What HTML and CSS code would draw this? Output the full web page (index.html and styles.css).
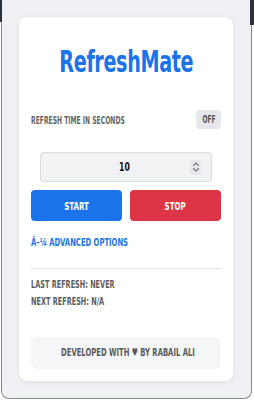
FILE: index.html
```html
<!DOCTYPE html>
<html>
<head>
<meta charset="utf-8">
<link rel="stylesheet" href="styles.css">
</head>
<body>
<div class="frame">
  <div class="card">
    <h1 class="title"><span class="sx">RefreshMate</span></h1>
    <div class="row">
      <span class="label sx">Refresh time in seconds</span>
      <span class="badge"><span class="sx">OFF</span></span>
    </div>
    <div class="input">
      <span class="value"><span class="sx">10</span></span>
      <span class="spin">
        <svg width="8" height="12" viewBox="0 0 8 12"><path d="M1.5 4.5 L4 2 L6.5 4.5 M1.5 7.5 L4 10 L6.5 7.5" fill="none" stroke="#777" stroke-width="1.1" stroke-linecap="round" stroke-linejoin="round"/></svg>
      </span>
    </div>
    <div class="buttons">
      <button class="btn start"><span class="sx">Start</span></button>
      <button class="btn stop"><span class="sx">Stop</span></button>
    </div>
    <div class="advanced"><span class="sx left">â–¼ Advanced Options</span></div>
    <div class="divider"></div>
    <div class="status"><span class="sx left">Last refresh: Never</span></div>
    <div class="status"><span class="sx left">Next refresh: N/A</span></div>
    <div class="footer"><span class="sx">Developed with ♥ by Rabail Ali</span></div>
  </div>
</div>
</body>
</html>
```
FILE: styles.css
```css
html, body {
  margin: 0;
  padding: 0;
  background: #ffffff;
}
body {
  font-family: "Liberation Sans Narrow", "DejaVu Sans", sans-serif;
  font-stretch: condensed;
  font-weight: bold;
}
.sx {
  display: inline-block;
  white-space: nowrap;
  transform: scaleX(var(--sx, 0.7));
  transform-origin: center center;
}
.sx.left {
  transform-origin: left center;
}
.frame {
  position: relative;
  box-sizing: border-box;
  margin-left: 1px;
  width: 251px;
  height: 399px;
  border: 1px solid #8a8a8a;
  border-top: none;
  border-radius: 0 0 8px 8px;
  background: #eff0f3;
  padding: 17px 17px 0 17px;
}
.frame::before {
  content: "";
  position: absolute;
  left: -2px;
  top: 0;
  width: 2px;
  height: 22px;
  background: #2c3038;
}
.frame::after {
  content: "";
  position: absolute;
  right: -4px;
  top: 0;
  width: 5px;
  height: 25px;
  background: #2c3038;
}
.card {
  box-sizing: border-box;
  width: 214px;
  height: 364px;
  background: #ffffff;
  border-radius: 8px;
  box-shadow: 0 1px 4px rgba(0,0,0,0.08);
  padding: 25px 12px 12px 12px;
  display: flex;
  flex-direction: column;
}
.title {
  margin: 0;
  height: 40px;
  line-height: 40px;
  text-align: center;
  color: #1a73e8;
  font-size: 30px;
  font-weight: bold;
  letter-spacing: -0.5px;
  --sx: 0.71;
}
.row {
  margin-top: 28px;
  display: flex;
  align-items: center;
  justify-content: space-between;
  height: 19px;
}
.label {
  font-size: 10.5px;
  color: #666666;
  text-transform: uppercase;
  transform-origin: left center;
  --sx: 0.64;
}
.badge {
  width: 25px;
  height: 19px;
  line-height: 19px;
  text-align: center;
  background: #e6e7ea;
  border-radius: 4px;
  font-size: 10px;
  color: #555555;
  --sx: 0.66;
}
.input {
  box-sizing: border-box;
  margin: 23px auto 0 auto;
  width: 172px;
  height: 30px;
  background: #f1f2f4;
  border: 1px solid #dcdde0;
  border-radius: 3px;
  display: flex;
  align-items: center;
  padding: 0 10px 0 10px;
}
.value {
  flex: 1;
  text-align: center;
  font-size: 12px;
  color: #111111;
  padding-left: 8px;
  --sx: 0.72;
}
.spin {
  width: 11px;
  height: 15px;
  border-radius: 3px;
  background: #e7e8eb;
  display: flex;
  align-items: center;
  justify-content: center;
}
.buttons {
  margin-top: 8px;
  display: flex;
  gap: 8px;
}
.btn {
  flex: 1;
  height: 31px;
  border: none;
  border-radius: 4px;
  color: #ffffff;
  font-family: inherit;
  font-stretch: condensed;
  font-weight: bold;
  font-size: 10.5px;
  text-transform: uppercase;
  padding: 0;
  --sx: 0.75;
}
.start {
  background: #1a73e8;
}
.stop {
  background: #dc3545;
}
.advanced {
  margin-top: 15px;
  height: 14px;
  line-height: 14px;
  font-size: 11px;
  color: #1a73e8;
  text-transform: uppercase;
  --sx: 0.69;
}
.divider {
  margin-top: 18px;
  height: 1px;
  background: #e2e3e6;
}
.status {
  height: 17px;
  line-height: 17px;
  font-size: 11px;
  color: #5c5c5c;
  text-transform: uppercase;
  --sx: 0.66;
}
.divider + .status {
  margin-top: 7px;
}
.footer {
  margin-top: 27px;
  height: 32px;
  line-height: 32px;
  background: #f5f6f8;
  border-radius: 6px;
  text-align: center;
  font-size: 11px;
  color: #5a5a5a;
  text-transform: uppercase;
  --sx: 0.69;
}
```
